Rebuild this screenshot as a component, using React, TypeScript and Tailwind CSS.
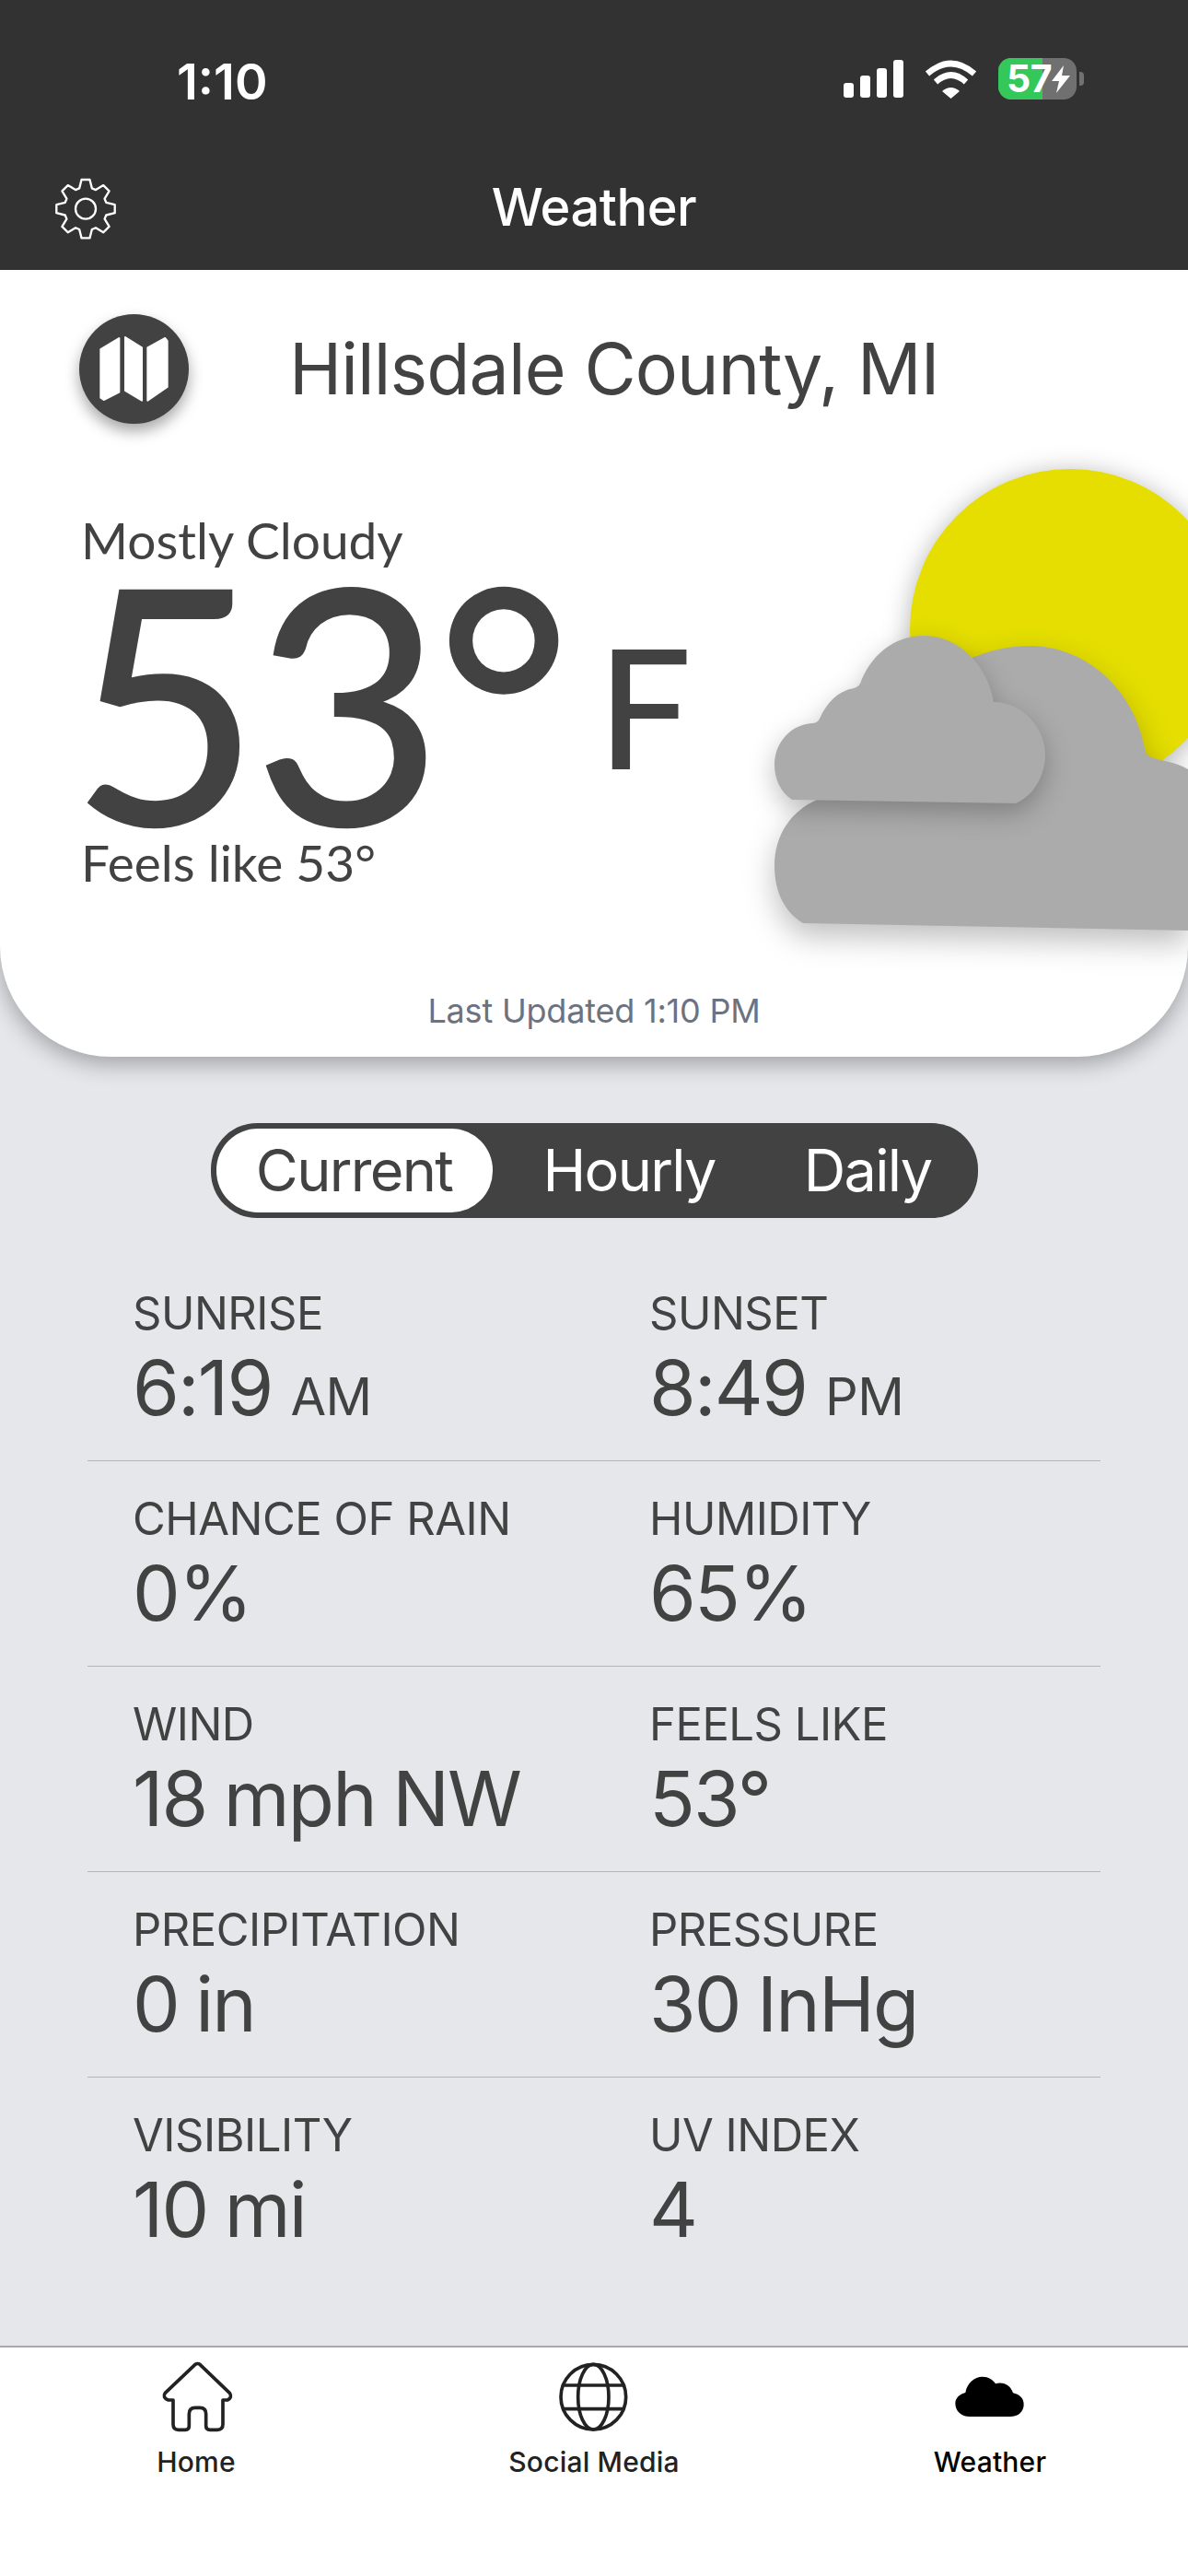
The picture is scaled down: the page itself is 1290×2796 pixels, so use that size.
const stats = [
  { label: "SUNRISE", value: "6:19", unit: "AM", rightLabel: "SUNSET", rightValue: "8:49", rightUnit: "PM" },
  { label: "CHANCE OF RAIN", value: "0%", rightLabel: "HUMIDITY", rightValue: "65%" },
  { label: "WIND", value: "18 mph NW", rightLabel: "FEELS LIKE", rightValue: "53°" },
  { label: "PRECIPITATION", value: "0 in", rightLabel: "PRESSURE", rightValue: "30 InHg" },
  { label: "VISIBILITY", value: "10 mi", rightLabel: "UV INDEX", rightValue: "4" },
];

const gearPoints = () => {
  const pts: string[] = [];
  for (let i = 0; i < 8; i++) {
    const a = (i * Math.PI) / 4 - Math.PI / 2;
    const d = Math.PI / 180;
    const pairs: [number, number][] = [
      [70, -17],
      [96, -8],
      [96, 8],
      [70, 17],
    ];
    pairs.forEach(([r, off]) => {
      pts.push(`${(129 + r * Math.cos(a + off * d)).toFixed(1)},${(125 + r * Math.sin(a + off * d)).toFixed(1)}`);
    });
  }
  return pts.join(" ");
};

const Stat = ({ label, value, unit }: { label: string; value: string; unit?: string }) => (
  <div className="flex flex-col">
    <div className="text-[49px] leading-[60px] tracking-[-0.5px]">{label}</div>
    <div className="mt-[5px] text-[82px] leading-[92px] tracking-[-1.8px] [word-spacing:-3px]">
      {value}
      {unit && <span className="ml-[20px] text-[56px] tracking-[-0.5px]">{unit}</span>}
    </div>
  </div>
);

const WeatherArt = () => (
  <svg viewBox="800 480 490 580" className="absolute right-0 top-[187px] h-[580px] w-[490px] overflow-visible">
    <circle cx="1162" cy="683" r="174" fill="#e5de00" className="drop-shadow-[0_4px_14px_rgba(0,0,0,0.3)]" />
    <path
      d="M872 1002 L1290 1010 V835 C1275 826 1260 826 1250 822 C1244 819 1243 816 1243 812 C1232 750 1180 701 1118 701 C1095 701 1075 706 1050 716 L887 868 C860 880 841 905 841 940 C841 968 852 990 872 1002Z"
      fill="#ababab"
      className="drop-shadow-[0_14px_16px_rgba(0,0,0,0.25)]"
    />
    <path
      d="M860 868 L1103 872 C1122 864 1135 842 1135 819 C1135 790 1110 763 1081 762 C1077 762 1079 760 1078 757 C1070 720 1040 690 1003 690 C970 690 945 712 934 742 C932 745 930 746 927 747 C910 750 898 762 890 780 C888 784 885 785 882 785 C860 786 841 805 841 830 C841 846 848 860 860 868Z"
      fill="#ababab"
      className="drop-shadow-[0_10px_14px_rgba(0,0,0,0.25)]"
    />
  </svg>
);

export default function App() {
  return (
    <div className="flex h-[2796px] w-[1290px] flex-col overflow-hidden bg-[#e5e7eb] font-['Inter',sans-serif] text-[#424242]">
      <header className="relative z-10 h-[293px] shrink-0 bg-[#323232] text-white">
        <div className="flex h-[176px] items-start pt-[60px]">
          <div className="ml-[192px] text-[54px] font-semibold leading-[58px] tracking-[0px]">1:10</div>
          <div className="ml-auto mr-[113px] flex items-start pt-[5px]">
            <svg width="65" height="41" viewBox="0 0 65 41" fill="white">
              <rect x="0" y="25" width="11" height="16" rx="3" />
              <rect x="18" y="17" width="11" height="24" rx="3" />
              <rect x="36" y="9" width="11" height="32" rx="3" />
              <rect x="54" y="0" width="11" height="41" rx="3" />
            </svg>
            <svg className="ml-[23px]" width="57" height="42" viewBox="0 0 57 42" fill="none" stroke="white">
              <path d="M3 15 Q28.5 -7 54 15" strokeWidth="6.5" />
              <path d="M12 24 Q28.5 9 45 24" strokeWidth="6.5" />
              <path d="M19 34 Q28.5 26 38 34 L28.5 42 Z" fill="white" stroke="none" />
            </svg>
            <div className="relative ml-[23px] -mt-[2px] flex h-[45px] w-[85px] items-center rounded-[14px] bg-[#707070]">
              <div className="absolute inset-y-0 left-0 w-[48px] rounded-l-[14px] bg-[#34c759]" />
              <span className="relative ml-[9px] text-[41px] font-bold leading-none tracking-[-0.5px]">57</span>
              <svg className="relative shrink-0" width="20" height="30" viewBox="0 0 20 30" fill="white">
                <path d="M13 0 L0 17 H8 L5 30 L20 11 H11 Z" />
              </svg>
            </div>
            <div className="ml-[3px] mt-[13px] h-[15px] w-[5px] rounded-r-[4px] bg-[#707070]" />
          </div>
        </div>
        <div className="relative flex h-[70px] items-center justify-center pt-[28px]">
          <svg className="absolute left-[50px] top-[9px]" width="90" height="85" viewBox="0 0 270 255" fill="none" stroke="white" strokeWidth="7">
            <polygon points={gearPoints()} strokeLinejoin="round" />
            <circle cx="129" cy="125" r="33" />
          </svg>
          <div className="text-[56px] font-medium leading-none tracking-[-0.5px]">Weather</div>
        </div>
      </header>

      <section className="relative h-[854px] shrink-0 overflow-hidden rounded-b-[120px] bg-white shadow-[0_8px_24px_rgba(0,0,0,0.3)]">
        <div className="flex items-start pl-[86px] pt-[48px]">
          <div className="flex h-[119px] w-[119px] items-center justify-center rounded-full bg-[#424242] shadow-[0_8px_16px_rgba(0,0,0,0.35)]">
            <svg width="119" height="119" viewBox="48 33 357 357" fill="white" stroke="white" strokeWidth="6" strokeLinejoin="round">
              <path d="M118 147 L178 111 V287 L128 312 L118 305 Z" />
              <path d="M198 108 L252 142 V314 L198 282 Z" />
              <path d="M271 142 L328 111 L335 120 V270 L271 314 Z" />
            </svg>
          </div>
          <h1 className="ml-[109px] mt-[14px] text-[77px] font-normal leading-[90px] tracking-[-0.9px]">Hillsdale County, MI</h1>
        </div>
        <div className="pl-[88px] pt-[96px] font-['Lato',sans-serif]">
          <div className="text-[55px] leading-[60px]">Mostly Cloudy</div>
          <div className="mt-[3px] flex items-start">
            <span className="-ml-[11px] -mt-[36px] text-[354px] leading-[350px] tracking-[-7px] [-webkit-text-stroke:3px_#424242]">53°</span>
            <span className="ml-[36px] mt-[57px] text-[178px] leading-[178px] [-webkit-text-stroke:2px_#424242]">F</span>
          </div>
          <div className="-mt-[27px] text-[55px] leading-[60px]">Feels like 53°</div>
        </div>
        <WeatherArt />
        <div className="absolute inset-x-0 bottom-[28px] text-center text-[36px] leading-[44px] tracking-[-0.2px] text-[#6b7280]">Last Updated 1:10 PM</div>
      </section>

      <main className="flex flex-1 flex-col">
        <div className="mx-auto mt-[72px] flex h-[103px] w-[833px] items-center rounded-[50px] bg-[#424242] pl-[6px] text-[63px] tracking-[-1.7px] text-white">
          <div className="flex h-[91px] w-[300px] items-center justify-center rounded-[45px] bg-white text-[#424242]">Current</div>
          <div className="ml-[55px]">Hourly</div>
          <div className="ml-[96px]">Daily</div>
        </div>
        <div className="mx-[95px] mt-[41px] flex flex-col">
          {stats.map((row, i) => (
            <div key={row.label} className={`grid h-[223px] grid-cols-[561px_1fr] pl-[49px] pt-[33px] ${i < stats.length - 1 ? "border-b border-[#b4b5ba]" : ""}`}>
              <Stat label={row.label} value={row.value} unit={row.unit} />
              <Stat label={row.rightLabel} value={row.rightValue} unit={row.rightUnit} />
            </div>
          ))}
        </div>
      </main>

      <nav className="grid h-[250px] shrink-0 grid-cols-3 border-t-[2px] border-[#a9a9ab] bg-white pt-[6px] text-[30px] font-medium tracking-[0.2px] text-[#222222]">
        <div className="flex flex-col items-center">
          <svg className="-ml-[7px]" width="100" height="95" viewBox="0 0 300 285" fill="none" stroke="#222222" strokeWidth="11" strokeLinejoin="round">
            <path d="M150 37 Q158 32 165 37 L262 130 Q272 145 255 153 H240 V232 Q240 250 222 250 H198 Q185 250 185 238 V198 Q185 178 165 178 H150 Q130 178 130 198 V238 Q130 250 118 250 H95 Q78 250 78 232 V153 H62 Q42 145 52 130 Z" />
          </svg>
          <span className="-ml-[4px] mt-[5px] leading-[36px]">Home</span>
        </div>
        <div className="flex flex-col items-center">
          <svg width="100" height="95" viewBox="0 0 300 285" fill="none" stroke="#222222" strokeWidth="11">
            <circle cx="148" cy="143" r="106" />
            <ellipse cx="148" cy="143" rx="50" ry="106" />
            <path d="M52 105 H244 M52 182 H244" />
          </svg>
          <span className="mt-[5px] leading-[36px]">Social Media</span>
        </div>
        <div className="flex flex-col items-center text-black">
          <svg width="100" height="70" viewBox="0 0 300 210" fill="black" className="mt-[14px]">
            <path d="M85 165 C55 165 37 145 37 122 C37 105 50 92 70 87 C75 55 100 35 125 35 C145 35 160 45 168 58 C195 50 218 65 225 88 C245 92 260 105 260 125 C260 148 243 165 215 165 Z" />
          </svg>
          <span className="mt-[16px] leading-[36px]">Weather</span>
        </div>
      </nav>
    </div>
  );
}
